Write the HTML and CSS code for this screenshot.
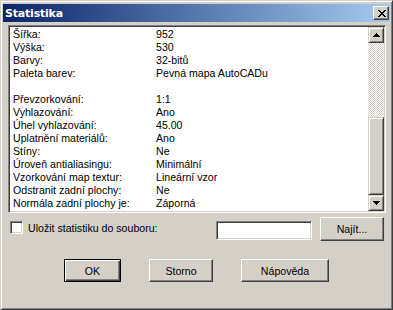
FILE: index.html
```html
<!DOCTYPE html>
<html lang="cs">
<head>
  <meta charset="UTF-8" />
  <meta name="viewport" content="width=device-width, initial-scale=1.0"/>
  <title>Statistika</title>
  <link rel="stylesheet" href="styles.css">
</head>
<body>
  <div class="dialog">
    <div class="titlebar">
      <span class="title">Statistika</span>
      <button class="close-btn">
        <svg width="8" height="7" viewBox="0 0 8 7" shape-rendering="crispEdges">
          <path fill="#000" d="M0 0h2v1H0zM6 0h2v1H6zM1 1h2v1H1zM5 1h2v1H5zM2 2h4v1H2zM3 3h2v1H3zM2 4h4v1H2zM1 5h2v1H1zM5 5h2v1H5zM0 6h2v1H0zM6 6h2v1H6z"/>
        </svg>
      </button>
    </div>

    <div class="content">
      <div class="listbox">
        <div class="list-rows">
          <div class="row"><span>Šířka:</span><span>952</span></div>
          <div class="row"><span>Výška:</span><span>530</span></div>
          <div class="row"><span>Barvy:</span><span>32-bitů</span></div>
          <div class="row"><span>Paleta barev:</span><span>Pevná mapa AutoCADu</span></div>
          <div class="row"></div>
          <div class="row"><span>Převzorkování:</span><span>1:1</span></div>
          <div class="row"><span>Vyhlazování:</span><span>Ano</span></div>
          <div class="row"><span>Úhel vyhlazování:</span><span>45.00</span></div>
          <div class="row"><span>Uplatnění materiálů:</span><span>Ano</span></div>
          <div class="row"><span>Stíny:</span><span>Ne</span></div>
          <div class="row"><span>Úroveň antialiasingu:</span><span>Minimální</span></div>
          <div class="row"><span>Vzorkování map textur:</span><span>Lineární vzor</span></div>
          <div class="row"><span>Odstranit zadní plochy:</span><span>Ne</span></div>
          <div class="row"><span>Normála zadní plochy je:</span><span>Záporná</span></div>
        </div>
        <div class="scrollbar">
          <div class="sb-btn">
            <svg width="7" height="4" viewBox="0 0 7 4" shape-rendering="crispEdges">
              <path fill="#000" d="M3 0h1v1H3zM2 1h3v1H2zM1 2h5v1H1zM0 3h7v1H0z"/>
            </svg>
          </div>
          <div class="sb-track"></div>
          <div class="sb-thumb"></div>
          <div class="sb-btn">
            <svg width="7" height="4" viewBox="0 0 7 4" shape-rendering="crispEdges">
              <path fill="#000" d="M0 0h7v1H0zM1 1h5v1H1zM2 2h3v1H2zM3 3h1v1H3z"/>
            </svg>
          </div>
        </div>
      </div>

      <div class="save-row">
        <label class="check"><span class="checkbox"></span>Uložit statistiku do souboru:</label>
        <input class="file-input" type="text">
        <button class="btn btn-find">Najít...</button>
      </div>

      <div class="actions">
        <button class="btn btn-default btn-ok">OK</button>
        <button class="btn btn-cancel">Storno</button>
        <button class="btn btn-help">Nápověda</button>
      </div>
    </div>
  </div>
</body>
</html>
```

FILE: styles.css
```css
body {
  margin: 0;
  background: #d4d0c8;
}

.dialog {
  width: 393px;
  height: 310px;
  box-sizing: border-box;
  padding: 3px 2px 2px 2px;
  background: #d4d0c8;
  border: 1px solid;
  border-color: #d4d0c8 #404040 #404040 #d4d0c8;
  box-shadow: inset 1px 1px #fff, inset -1px -1px #808080;
  font-family: "Liberation Sans", Arial, sans-serif;
  font-size: 10.6px;
  color: #000;
}

.titlebar {
  height: 18px;
  display: flex;
  align-items: center;
  padding: 0 1px 0 2px;
  background: linear-gradient(to right, #0a246a, #a6caf0);
}

.title {
  color: #fff;
  font-family: "DejaVu Sans", Verdana, sans-serif;
  font-weight: bold;
  font-size: 11px;
  letter-spacing: -0.2px;
}

.close-btn {
  margin-left: auto;
  width: 16px;
  height: 14px;
  box-sizing: border-box;
  padding: 0 0 0 1px;
  display: flex;
  align-items: center;
  justify-content: center;
  background: #d4d0c8;
  border: 1px solid;
  border-color: #fff #404040 #404040 #fff;
  box-shadow: inset -1px -1px #808080;
}

.content {
  padding: 3px 0 0 5px;
}

/* seznam hodnot */
.listbox {
  display: flex;
  width: 378px;
  height: 188px;
  box-sizing: border-box;
  padding: 1px;
  background: #fff;
  border: 1px solid;
  border-color: #808080 #fff #fff #808080;
  box-shadow: inset 1px 1px #404040, inset -1px -1px #d4d0c8;
}

.list-rows {
  flex: 1;
  padding: 1px 0 0 3px;
}

.row {
  display: grid;
  grid-template-columns: 143px 1fr;
  height: 13px;
  line-height: 13px;
  white-space: nowrap;
}

.scrollbar {
  width: 16px;
  display: flex;
  flex-direction: column;
}

.sb-btn,
.sb-thumb {
  box-sizing: border-box;
  background: #d4d0c8;
  border: 1px solid;
  border-color: #d4d0c8 #404040 #404040 #d4d0c8;
  box-shadow: inset 1px 1px #fff, inset -1px -1px #808080;
}

.sb-btn {
  height: 16px;
  display: flex;
  align-items: center;
  justify-content: center;
}

.sb-track {
  flex: 1;
  background-color: #fff;
  background-image: conic-gradient(#d4d0c8 25%, #fff 0 50%, #d4d0c8 0 75%, #fff 0);
  background-size: 2px 2px;
}

.sb-thumb {
  height: 78px;
}

/* ulozeni do souboru */
.save-row {
  display: flex;
  align-items: flex-start;
  height: 24px;
  margin-top: 4px;
  margin-left: -5px;
}

.check {
  flex: 1;
  display: flex;
  align-items: center;
  gap: 5px;
  margin: 4px 0 0 7px;
}

.checkbox {
  width: 13px;
  height: 13px;
  box-sizing: border-box;
  background: #fff;
  border: 1px solid;
  border-color: #808080 #fff #fff #808080;
  box-shadow: inset 1px 1px #404040, inset -1px -1px #d4d0c8;
}

.file-input {
  width: 96px;
  height: 19px;
  box-sizing: border-box;
  margin: 4px 0 0 0;
  padding: 0 2px;
  background: #fff;
  border: 1px solid;
  border-color: #808080 #fff #fff #808080;
  box-shadow: inset 1px 1px #404040, inset -1px -1px #d4d0c8;
  outline: none;
}

.btn {
  box-sizing: border-box;
  margin: 0;
  padding: 0;
  background: #d4d0c8;
  font-family: "Liberation Sans", Arial, sans-serif;
  font-size: 10.6px;
  color: #000;
  border: 1px solid;
  border-color: #fff #404040 #404040 #fff;
  box-shadow: inset -1px -1px #808080;
}

.btn-default {
  border: 1px solid #000;
  box-shadow: inset 1px 1px #fff, inset -1px -1px #404040, inset -2px -2px #808080;
}

.btn-find {
  width: 64px;
  height: 24px;
  margin: 0 6px 0 8px;
}

.actions {
  display: flex;
  gap: 28px;
  margin-top: 18px;
  padding-left: 56px;
}

.actions .btn {
  height: 23px;
}

.btn-ok {
  width: 57px;
}

.btn-cancel {
  width: 64px;
}

.btn-help {
  width: 88px;
}
```
